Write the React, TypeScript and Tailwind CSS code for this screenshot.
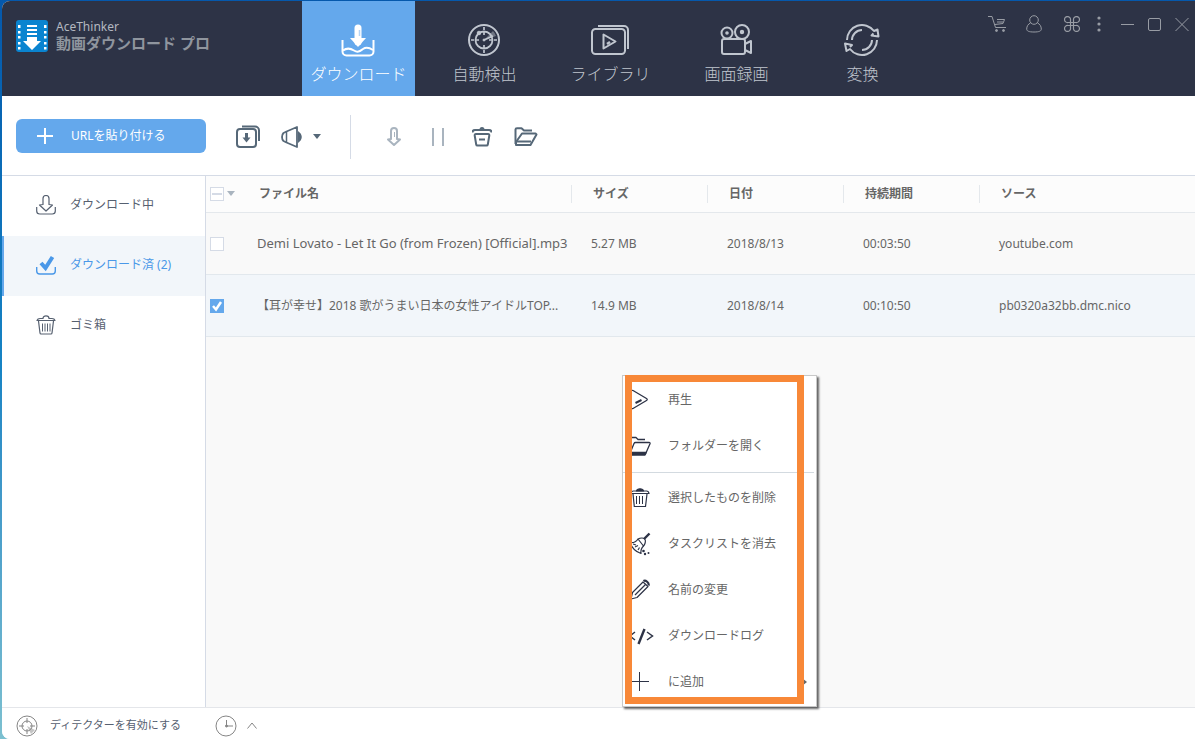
import React from 'react';

interface IconProps {
  className?: string;
}

/* ---------- Header icons ---------- */

const LogoIcon: React.FC = () => (
  <svg width="32" height="32" viewBox="0 0 32 32" aria-hidden="true">
    <rect width="32" height="32" rx="3" fill="#0a84d0" />
    <g fill="#fff">
      <path d="M2 5h2.500v3H2zM2 11h2.500v2.500H2zM2 16h2.500v2.500H2zM2 22h2.500v2.500H2zM2 27h2.500v2.500H2z" />
      <path d="M28 5h2.500v3H28zM28 11h2.500v2.500H28zM28 16h2.500v2.500H28zM28 22h2.500v2.500H28zM28 27h2.500v2.500H28z" />
      <path d="M11 5h10v2H11zM11 9h10v2H11zM11 13h10v2H11zM11 17h10v4h4l-9 9-9-9h4z" />
    </g>
  </svg>
);

const DownloadTabIcon: React.FC = () => (
  <svg width="34" height="34" viewBox="0 0 34 34" fill="none" aria-hidden="true">
    <path d="M17 5v14" stroke="#fff" strokeWidth="7" strokeLinecap="round" />
    <path d="M18.500 7v6" stroke="#b4d4f6" strokeWidth="1.500" />
    <path d="M9 15h16l-8 9z" fill="#fff" />
    <path d="M1.500 17v11.500a4 4 0 0 0 4 4h23a4 4 0 0 0 4-4V17" stroke="#fff" strokeWidth="2" />
    <path d="M2 27.500c4-3 7-2.500 11 0s6 .5 9-1.500 6-1.500 10 1" stroke="#fff" strokeWidth="2" />
  </svg>
);

const RadarIcon: React.FC = () => (
  <svg width="36" height="34" viewBox="0 0 36 34" fill="none" stroke="currentColor" aria-hidden="true">
    <circle cx="18" cy="17" r="15" strokeWidth="2" />
    <circle cx="18" cy="17" r="8.500" strokeWidth="1.800" />
    <path d="M18 17l9-9a13 13 0 0 1 3 5z" fill="currentColor" stroke="none" opacity=".45" />
    <circle cx="18" cy="17" r="1" fill="currentColor" />
    <path d="M18 17l9-4M18 4v3M18 9v3M18 22v3M18 27v3M5 17h3M10 17h3M23 17h3M28 17h3" strokeWidth="1.700" />
    <circle cx="13" cy="10" r="1.800" fill="currentColor" />
  </svg>
);

const LibraryIcon: React.FC = () => (
  <svg width="38" height="34" viewBox="0 0 38 34" fill="none" stroke="currentColor" strokeWidth="2" strokeLinejoin="round" aria-hidden="true">
    <rect x="1" y="6" width="33" height="25" rx="3.500" />
    <path d="M7 3h26a4 4 0 0 1 4 4v19" />
    <path d="M12.500 11.500v14l12-7z" />
    <path d="M16 21l3-2" strokeWidth="2.500" />
  </svg>
);

const CameraIcon: React.FC = () => (
  <svg width="36" height="34" viewBox="0 0 36 34" fill="none" stroke="currentColor" strokeWidth="2" strokeLinejoin="round" aria-hidden="true">
    <circle cx="9" cy="10" r="5.500" />
    <circle cx="24" cy="9" r="7" />
    <circle cx="9" cy="10" r=".8" fill="currentColor" />
    <circle cx="24" cy="9" r="1.200" fill="currentColor" />
    <rect x="4" y="16" width="23" height="15" rx="2" />
    <path d="M27 21l6-3v12l-6-3" />
  </svg>
);

const ConvertIcon: React.FC = () => (
  <svg width="38" height="34" viewBox="0 0 38 34" fill="none" stroke="currentColor" strokeWidth="2" strokeLinejoin="round" aria-hidden="true">
    <path d="M4 17A15 15 0 0 1 31 8l3.500-1.500 1 7-7-1 2-2" />
    <path d="M34 17A15 15 0 0 1 7 26l-3.500 2L2 20.500l7 1.500-2 2" />
    <path d="M9 17a10 10 0 0 1 10-10M29 17a10 10 0 0 1-10 10" />
  </svg>
);

const CartIcon: React.FC = () => (
  <svg width="18" height="18" viewBox="0 0 18 18" fill="none" stroke="currentColor" aria-hidden="true">
    <path d="M0 1.500h4l3.500 11H18M9 4.500h7.500l-1.500 4-8 1M9 7h6" />
    <circle cx="8.500" cy="15.500" r="1" fill="currentColor" />
    <circle cx="15.500" cy="15.500" r="1" fill="currentColor" />
  </svg>
);

const UserIcon: React.FC = () => (
  <svg width="16" height="18" viewBox="0 0 16 18" fill="none" stroke="currentColor" aria-hidden="true">
    <circle cx="8" cy="5" r="4.300" />
    <path d="M4.500 8C2 9 .7 11.500.7 14c0 2 2 3 7.300 3s7.300-1 7.300-3c0-2.500-1.300-5-3.800-6" />
  </svg>
);

const CommandIcon: React.FC = () => (
  <svg width="16" height="16" viewBox="0 0 16 16" fill="none" stroke="currentColor" strokeWidth="1.200" aria-hidden="true">
    <path d="M6.500 6.500H4A3 3 0 1 1 6.500 4v8A3 3 0 1 1 4 9.500h8A3 3 0 1 1 9.500 12V4A3 3 0 1 1 12 6.500z" />
  </svg>
);

/* ---------- Toolbar icons ---------- */

const StackDownIcon: React.FC = () => (
  <svg width="24" height="24" viewBox="0 0 24 24" fill="none" stroke="currentColor" strokeWidth="2" aria-hidden="true">
    <rect x="1" y="4" width="19" height="18" rx="3" />
    <path d="M6 1.500h13a4 4 0 0 1 4 4V16" />
    <path d="M10.500 8v6" strokeWidth="3" />
    <path d="M6.500 12.500h8l-4 5z" fill="currentColor" stroke="none" />
  </svg>
);

const MegaphoneIcon: React.FC = () => (
  <svg width="22" height="24" viewBox="0 0 22 24" fill="none" stroke="currentColor" strokeWidth="1.800" strokeLinejoin="round" aria-hidden="true">
    <path d="M5.500 6.500L16 2v20L5.500 17.500l-3-1.500c-2-2-2-6 0-8z" />
    <path d="M5.500 6.500v11" strokeWidth="1.500" />
    <path d="M17 6c5 3.500 5 8.500 0 12z" fill="currentColor" stroke="none" />
  </svg>
);

const Caret: React.FC<IconProps> = ({ className }) => (
  <svg width="8" height="5" viewBox="0 0 8 5" className={className} aria-hidden="true">
    <path d="M0 0h8L4 5z" fill="currentColor" />
  </svg>
);

const ArrowDownIcon: React.FC = () => (
  <svg width="16" height="20" viewBox="0 0 16 20" fill="none" stroke="currentColor" strokeWidth="2" strokeLinejoin="round" aria-hidden="true">
    <path d="M5 12V4a3 3 0 0 1 6 0v8l3 .5-6 5.500-6-5.500z" />
    <path d="M8.500 5v5" strokeWidth="1" />
  </svg>
);

const BinIcon: React.FC = () => (
  <svg width="20" height="20" viewBox="0 0 20 20" fill="none" stroke="currentColor" strokeWidth="2" strokeLinejoin="round" aria-hidden="true">
    <path d="M.5 5.500C.5 4 1.500 3 3 3h14c1.500 0 2.500 1 2.500 2.500M8.500 2.500a1.500 1.500 0 0 1 3 0" />
    <path d="M4 7h12c1 0 1.500.5 1.300 1.500l-1.500 9c-.1.700-.5 1-1.300 1h-9c-.8 0-1.200-.3-1.300-1l-1.500-9C2.500 7.500 3 7 4 7z" />
    <path d="M7 12.500h6" />
  </svg>
);

const FolderIcon: React.FC = () => (
  <svg width="24" height="20" viewBox="0 0 24 20" fill="none" stroke="currentColor" strokeWidth="2" strokeLinejoin="round" aria-hidden="true">
    <path d="M1.500 17V2.500c0-1 .5-1.300 1.500-1.300h4.500L10 3.500h8" />
    <path d="M2 18h14.500l6-10.500-1-1H8L2 15z" />
    <path d="M3 14.500h14" />
  </svg>
);

/* ---------- Sidebar icons ---------- */

const TrayIcon: React.FC = () => (
  <svg width="20" height="20" viewBox="0 0 20 20" fill="none" stroke="currentColor" strokeWidth="1.200" strokeLinejoin="round" aria-hidden="true">
    <path d="M.7 12v4c0 2 1 3 3 3h12.600c2 0 3-1 3-3v-4" />
    <path d="M7 9.500V3.500a3 3 0 0 1 6 0v6l3.500.5-6.500 6-6.500-6z" />
  </svg>
);

const DoneIcon: React.FC = () => (
  <svg width="20" height="20" viewBox="0 0 20 20" fill="none" stroke="currentColor" aria-hidden="true">
    <path d="M.7 12v4c0 2 1 3 3 3h12.600c2 0 3-1 3-3v-4" strokeWidth="1.400" />
    <path d="M5 8l4.500 5L16.500 2" strokeWidth="4" />
  </svg>
);

const TrashIcon: React.FC = () => (
  <svg width="20" height="20" viewBox="0 0 20 20" fill="none" stroke="currentColor" strokeWidth="1.200" strokeLinejoin="round" aria-hidden="true">
    <path d="M1 5.500C1.500 4 2.500 3.500 4 3.500h3c0-3.500 6-3.500 6 0h3c1.500 0 2.500.5 3 2z" />
    <path d="M2.500 6l1.500 12c.1.800.5 1 1 1h10c.5 0 .9-.2 1-1l1.500-12" />
    <path d="M6.500 8.500v8M9 8.500v8M11.500 8.500v8M14 8.500v8" strokeWidth="1" />
  </svg>
);

/* ---------- Context menu icons ---------- */

const MenuPlayIcon: React.FC = () => (
  <svg width="24" height="22" viewBox="0 0 24 22" fill="none" stroke="currentColor" strokeWidth="1.300" strokeLinejoin="round">
    <path d="M3 2.500c0-1 1-1.500 2-1l13.500 8c1 .6 1 1.400 0 2L5 19.500c-1 .5-2 0-2-1z" />
    <path d="M7.500 14l6-3" strokeWidth="2" />
  </svg>
);

const MenuFolderIcon: React.FC = () => (
  <svg width="24" height="22" viewBox="0 0 24 22" fill="none" stroke="currentColor" strokeWidth="1.300" strokeLinejoin="round">
    <path d="M1 18V4c0-1 .5-1.500 1.500-1.500H8l2 2h7" />
    <path d="M1.500 19.500L6 8.500c.3-.7.700-1 1.500-1H21c1 0 1.300.5 1 1.300L17.500 19z" />
    <path d="M2.500 17.500h15.500L17 20H1.500z" fill="currentColor" />
  </svg>
);

const MenuTrashIcon: React.FC = () => (
  <svg width="24" height="22" viewBox="0 0 24 22" fill="none" stroke="currentColor" strokeWidth="1.200">
    <path d="M3 6.500C3.300 4.500 4 4 5.500 4h13c1.500 0 2.200.5 2.500 2.500z" />
    <path d="M8.500 4C9 1 15 1 15.500 4z" fill="currentColor" />
    <path d="M5 7l1.300 12.500h11.200L19 7" />
    <path d="M8.500 9v8M11.500 9v8M14.500 9v8" strokeWidth="1" />
  </svg>
);

const MenuBroomIcon: React.FC = () => (
  <svg width="24" height="24" viewBox="0 0 24 24" fill="none" stroke="currentColor" strokeWidth="1.200" strokeLinejoin="round">
    <path d="M21.500 1.500L16 7" strokeWidth="2.400" />
    <path d="M10 7c3-1.500 6-1 7 .5s0 5-1.500 6.500z" />
    <path d="M10 7c-2 3-5 4-8 3.500C4 16 8 20 13 21.500c-.5-3 .5-5.500 2.500-7.500M5 12l3 1M7 15l3-1.500M10 18l1.500-2.500" />
    <g fill="currentColor" stroke="none">
      <circle cx="15.500" cy="19" r="1.300" />
      <circle cx="17" cy="22" r="1.200" />
      <circle cx="20.500" cy="21" r="1" />
    </g>
  </svg>
);

const MenuPencilIcon: React.FC = () => (
  <svg width="24" height="22" viewBox="0 0 24 22" fill="none" stroke="currentColor" strokeWidth="1.200" strokeLinejoin="round">
    <path d="M3 20l1.500-6.500L15 3l5 4.500L9 18.500z" />
    <path d="M7 16L17.500 5.500" />
    <path d="M15.500 2c2-1.500 6 2 5 4.500" strokeWidth="2.200" />
  </svg>
);

const MenuCodeIcon: React.FC = () => (
  <svg width="26" height="20" viewBox="0 0 26 20" fill="none" stroke="currentColor">
    <path d="M7 6l-5 4 5 4M19 6l5.500 4-5.500 4" strokeWidth="1.500" />
    <path d="M16.500 3l-6 15" strokeWidth="2.400" />
  </svg>
);

const MenuPlusIcon: React.FC = () => (
  <svg width="24" height="22" viewBox="0 0 24 22" stroke="currentColor">
    <path d="M2 10.500h19M11.500 1v19" />
  </svg>
);

/* ---------- Footer icons ---------- */

const DetectorIcon: React.FC = () => (
  <svg width="22" height="22" viewBox="0 0 22 22" fill="none" stroke="#858585" aria-hidden="true">
    <path d="M11 11l8 4-4 4z" fill="#c4c4c4" stroke="none" />
    <circle cx="11" cy="11" r="10" />
    <circle cx="11" cy="11" r="5" />
    <path d="M11 3v5M11 14v5M3 11h5M14 11h5" />
  </svg>
);

const ClockIcon: React.FC = () => (
  <svg width="22" height="22" viewBox="0 0 22 22" fill="none" stroke="#858585" aria-hidden="true">
    <circle cx="11" cy="11" r="10" />
    <path d="M11.500 5v6H18" />
    <circle cx="11.500" cy="11" r="1" fill="#858585" />
  </svg>
);

const tabs = [
  { label: 'ダウンロード', icon: <DownloadTabIcon />, active: true },
  { label: '自動検出', icon: <RadarIcon /> },
  { label: 'ライブラリ', icon: <LibraryIcon /> },
  { label: '画面録画', icon: <CameraIcon /> },
  { label: '変換', icon: <ConvertIcon /> },
];

const sideItems = [
  { label: 'ダウンロード中', icon: <TrayIcon /> },
  { label: 'ダウンロード済 (2)', icon: <DoneIcon />, active: true },
  { label: 'ゴミ箱', icon: <TrashIcon /> },
];

const columns = ['サイズ', '日付', '持続期間', 'ソース'];

const files = [
  {
    name: 'Demi Lovato - Let It Go (from Frozen) [Official].mp3',
    nameSize: 'text-[13px]',
    size: '5.27 MB',
    date: '2018/8/13',
    duration: '00:03:50',
    source: 'youtube.com',
    checked: false,
  },
  {
    name: '【耳が幸せ】2018 歌がうまい日本の女性アイドルTOP...',
    nameSize: 'text-xs',
    size: '14.9 MB',
    date: '2018/8/14',
    duration: '00:10:50',
    source: 'pb0320a32bb.dmc.nico',
    checked: true,
  },
];

const menuGroups = [
  [
    { label: '再生', icon: <MenuPlayIcon /> },
    { label: 'フォルダーを開く', icon: <MenuFolderIcon /> },
  ],
  [
    { label: '選択したものを削除', icon: <MenuTrashIcon /> },
    { label: 'タスクリストを消去', icon: <MenuBroomIcon /> },
    { label: '名前の変更', icon: <MenuPencilIcon /> },
    { label: 'ダウンロードログ', icon: <MenuCodeIcon /> },
    { label: 'に追加', icon: <MenuPlusIcon />, submenu: true },
  ],
];

const Header: React.FC = () => (
  <header className="flex h-[95px] shrink-0 bg-[#2d3346]">
    <div className="flex h-[69px] w-[300px] shrink-0 items-center gap-2 pl-[14px]">
      <LogoIcon />
      <div className="pb-[2px] text-[#8f959e]">
        <p className="text-xs leading-4 text-[#b4b8c0]">AceThinker</p>
        <h1 className="text-[15px] leading-4 font-bold">動画ダウンロード プロ</h1>
      </div>
    </div>

    <nav className="flex gap-[13px]">
      {tabs.map((tab) => (
        <button
          key={tab.label}
          className={`flex w-[113px] flex-col items-center pt-[22px] text-base leading-6 font-light whitespace-nowrap ${
            tab.active ? 'bg-[#64a8ec] text-white' : 'text-[#c0c6cf]'
          }`}
        >
          <span className="pr-[2px]">{tab.icon}</span>
          <span className="mt-[5px]">{tab.label}</span>
        </button>
      ))}
    </nav>

    <div className="ml-auto flex h-[45px] items-center pr-[6px] text-[#989ca4]">
      <button aria-label="Cart" className="mr-5"><CartIcon /></button>
      <button aria-label="Account" className="mr-[22px]"><UserIcon /></button>
      <button aria-label="Tools" className="mr-[17px]"><CommandIcon /></button>
      <button aria-label="More" className="mr-5">
        <svg width="4" height="16" viewBox="0 0 4 16" fill="currentColor">
          <circle cx="2" cy="2" r="1.600" />
          <circle cx="2" cy="8" r="1.600" />
          <circle cx="2" cy="14" r="1.600" />
        </svg>
      </button>
      <button aria-label="Minimize" className="mr-[14px]">
        <svg width="13" height="14" stroke="currentColor"><path d="M0 7.500h13" /></svg>
      </button>
      <button aria-label="Maximize" className="mr-[14px]">
        <svg width="13" height="14" fill="none" stroke="currentColor"><rect x=".5" y="1.500" width="12" height="12" rx="1.500" /></svg>
      </button>
      <button aria-label="Close">
        <svg width="14" height="14" stroke="currentColor"><path d="M.5 1l13 13M13.500 1L.5 14" /></svg>
      </button>
    </div>
  </header>
);

const Toolbar: React.FC = () => (
  <div className="flex h-20 shrink-0 items-center border-b border-[#d5dbe6] bg-white pl-[14px] text-[#566878]">
    <button className="flex h-[34px] w-[190px] items-center gap-[18px] rounded-md bg-[#64a8ec] pl-[21px] text-xs text-white">
      <svg width="16" height="16" viewBox="0 0 16 16" stroke="currentColor" strokeWidth="2" aria-hidden="true">
        <path d="M0 8h16M8 0v16" />
      </svg>
      URLを貼り付ける
    </button>
    <div className="flex items-center pt-[2px] pl-[30px]">
      <button aria-label="Batch download"><StackDownIcon /></button>
      <button aria-label="Announce" className="ml-[21px] flex items-center gap-[10px]">
        <MegaphoneIcon />
        <Caret />
      </button>
      <div className="ml-[29px] h-[44px] w-px bg-[#d5dbe6]" />
      <button aria-label="Start" className="ml-[35px] text-[#a9b4bf]"><ArrowDownIcon /></button>
      <button aria-label="Pause" className="ml-[30px] text-[#a9b4bf]">
        <svg width="12" height="18" stroke="currentColor" strokeWidth="2"><path d="M1 0v18M11 0v18" /></svg>
      </button>
      <button aria-label="Delete" className="ml-7"><BinIcon /></button>
      <button aria-label="Open folder" className="ml-[22px]"><FolderIcon /></button>
    </div>
  </div>
);

const Sidebar: React.FC = () => (
  <aside className="w-[204px] shrink-0 border-r border-[#d5dbe6] bg-white">
    {sideItems.map((item) => (
      <button
        key={item.label}
        className={`flex h-[60px] w-full items-center gap-[14px] border-l-2 pb-[2px] pl-8 text-xs ${
          item.active ? 'border-[#64a8ec] bg-[#f2f6fa] text-[#4a98e8]' : 'border-transparent text-[#566070]'
        }`}
      >
        {item.icon}
        <span>{item.label}</span>
      </button>
    ))}
  </aside>
);

const FileTable: React.FC = () => (
  <table className="w-full table-fixed border-collapse text-left text-xs text-[#666]">
    <colgroup>
      <col className="w-[31px]" />
      <col className="w-[334px]" />
      <col className="w-[136px]" />
      <col className="w-[136px]" />
      <col className="w-[136px]" />
      <col />
    </colgroup>
    <thead>
      <tr className="h-9 border-b border-[#e4e8ec] bg-[#fcfcfc]">
        <th className="pl-1">
          <div className="flex items-center gap-[3px]">
            <span className="grid shrink-0 place-items-center">
              <input type="checkbox" aria-label="Select all" className="size-[14px] appearance-none border border-[#d5dbe6] bg-white [grid-area:1/1]" />
              <span className="pointer-events-none h-[2px] w-[10px] bg-[#d5dbe6] [grid-area:1/1]" />
            </span>
            <button aria-label="Selection options" className="shrink-0"><Caret className="text-[#a9b4bf]" /></button>
          </div>
        </th>
        <th className="pl-[22px] font-bold">ファイル名</th>
        {columns.map((column) => (
          <th key={column}>
            <div className="flex h-[18px] items-center border-l border-[#e4e8ec] pl-[21px] font-bold">{column}</div>
          </th>
        ))}
      </tr>
    </thead>
    <tbody>
      {files.map((file) => (
        <tr
          key={file.name}
          className={`h-[62px] border-b border-[#e2e8ed] whitespace-nowrap ${file.checked ? 'bg-[#f2f6fa]' : 'bg-[#f9f9f9]'}`}
        >
          <td className="pt-[2px] pl-1">
            <span className="grid w-[14px]">
              <input
                type="checkbox"
                aria-label={file.name}
                defaultChecked={file.checked}
                className="peer size-[14px] appearance-none border border-[#d5dbe6] bg-white [grid-area:1/1] checked:border-[#64a8ec] checked:bg-[#64a8ec]"
              />
              <svg viewBox="0 0 14 14" className="pointer-events-none hidden size-[14px] [grid-area:1/1] peer-checked:block" fill="none" stroke="#fff" strokeWidth="2.500">
                <path d="M3 7l3 3.500L11 3" />
              </svg>
            </span>
          </td>
          <td className={`pt-[2px] pl-5 ${file.nameSize}`}>{file.name}</td>
          <td className="pt-[2px] pl-5">{file.size}</td>
          <td className="pt-[2px] pl-5">{file.date}</td>
          <td className="pt-[2px] pl-5">{file.duration}</td>
          <td className="pt-[2px] pl-5">{file.source}</td>
        </tr>
      ))}
    </tbody>
  </table>
);

const ContextMenu: React.FC = () => (
  <div className="absolute top-[199px] left-[416px] z-10 w-[195px] border border-[#c8c8c8] bg-white pb-[2px] shadow-[2px_2px_2px_rgba(0,0,0,0.6)]">
    {menuGroups.map((group, index) => (
      <div key={index} className={index > 0 ? 'mt-1 mr-[2px] border-t border-[#d3dae0] pt-px' : ''}>
        {group.map((item) => (
          <button key={item.label} className="flex h-[46px] w-full items-center pt-[2px] pl-[5px] text-xs text-[#666]">
            <span className="w-10 shrink-0 text-[#2d3346]">{item.icon}</span>
            {item.label}
            {item.submenu && (
              <svg width="5" height="8" viewBox="0 0 5 8" className="mr-[7px] ml-auto">
                <path d="M0 0l5 4-5 4z" fill="#666" />
              </svg>
            )}
          </button>
        ))}
      </div>
    ))}
    {/* Highlight frame */}
    <div className="pointer-events-none absolute -top-px bottom-[2px] left-[2px] w-[179px] border-7 border-[#f88838]" />
  </div>
);

const Footer: React.FC = () => (
  <footer className="flex h-8 shrink-0 items-center border-t border-[#e4e6ea] bg-white pl-[14px] pt-1 text-[11px] text-[#566070]">
    <button className="flex items-center gap-3">
      <DetectorIcon />
      ディテクターを有効にする
    </button>
    <button aria-label="Schedule" className="ml-[34px] flex items-center gap-[10px]">
      <ClockIcon />
      <svg width="10" height="7" fill="none" stroke="#858585" aria-hidden="true"><path d="M.5 6.500L5 1l4.500 5.500" /></svg>
    </button>
  </footer>
);

const App: React.FC = () => (
  <div className="flex min-h-screen bg-linear-to-b from-[#0558ac] via-[#1784c4] to-[#7cc0d0] pt-px pl-[2px] font-['Noto_Sans','Noto_Sans_CJK_JP',sans-serif]">
    <div className="flex min-w-0 flex-1 flex-col overflow-hidden rounded-l-lg bg-white">
      <Header />
      <Toolbar />
      <div className="flex flex-1">
        <Sidebar />
        <main className="relative min-w-0 flex-1 bg-[#f9f9f9]">
          <FileTable />
          <ContextMenu />
        </main>
      </div>
      <Footer />
    </div>
  </div>
);

export default App;
